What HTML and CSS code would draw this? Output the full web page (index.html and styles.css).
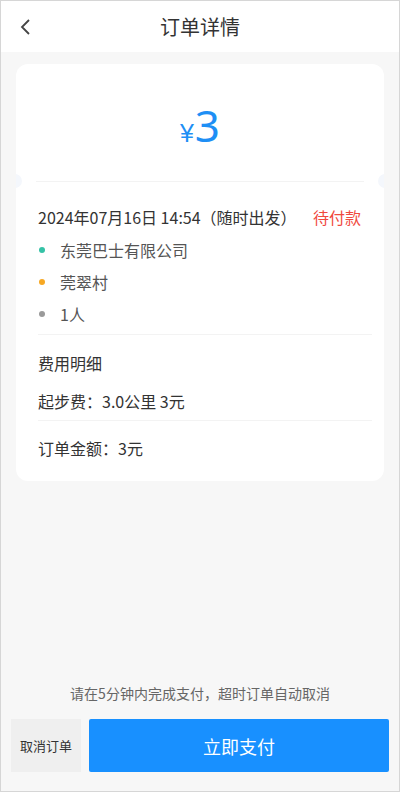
FILE: index.html
```html
<!DOCTYPE html>
<html>
<head>
    <meta charset="utf-8">
    <title>订单详情</title>
    <link rel="stylesheet" href="styles.css">
</head>
<body>
<div class="page">
    <div class="header">
        <span class="back">
            <svg width="12" height="18" viewBox="0 0 12 18"><path d="M10 2 L3 9 L10 16" fill="none" stroke="#444" stroke-width="1.8"/></svg>
        </span>
        <h1>订单详情</h1>
    </div>

    <div class="card">
        <div class="price">
            <span class="yen">¥</span><span class="amount">3</span>
        </div>
        <div class="cut">
            <span class="notch left"></span>
            <span class="line"></span>
            <span class="notch right"></span>
        </div>
        <div class="info">
            <div class="date-row">
                <span>2024年07月16日 14:54（随时出发）</span>
                <span class="status">待付款</span>
            </div>
            <ul class="items">
                <li class="item"><i class="dot green"></i>东莞巴士有限公司</li>
                <li class="item"><i class="dot orange"></i>莞翠村</li>
                <li class="item"><i class="dot gray"></i>1人</li>
            </ul>
        </div>
        <div class="fees">
            <div class="fees-title">费用明细</div>
            <div class="fee-row">起步费：3.0公里 3元</div>
        </div>
        <div class="total">订单金额：3元</div>
    </div>

    <div class="footer">
        <p class="hint">请在5分钟内完成支付，超时订单自动取消</p>
        <div class="actions">
            <button class="cancel-btn">取消订单</button>
            <button class="pay-btn">立即支付</button>
        </div>
    </div>
</div>
</body>
</html>
```

FILE: styles.css
```css
* {
    box-sizing: border-box;
}
body {
    margin: 0;
    font-family: "Noto Sans CJK SC", "Noto Sans", sans-serif;
    background: #fff;
}
.page {
    height: 792px;
    border: 1px solid #d6d6d6;
    background: #f7f7f7;
    display: flex;
    flex-direction: column;
}
.header {
    height: 51px;
    background: #fff;
    display: flex;
    align-items: center;
    justify-content: center;
    position: relative;
}
.header h1 {
    margin: 0;
    font-size: 20px;
    font-weight: normal;
    color: #333;
}
.back {
    position: absolute;
    left: 18px;
    top: 16px;
}
.card {
    margin: 12px 15px 0;
    background: #fff;
    border-radius: 12px;
    overflow: hidden;
}
.price {
    height: 116px;
    display: flex;
    align-items: baseline;
    justify-content: center;
    padding-top: 36px;
    color: #1e8ff5;
}
.yen {
    font-size: 25px;
    font-family: "Liberation Sans", sans-serif;
}
.amount {
    font-size: 44px;
    line-height: 50px;
    font-family: "Noto Sans", sans-serif;
    margin-left: 1px;
}
.cut {
    display: flex;
    align-items: center;
    height: 2px;
}
.notch {
    width: 14px;
    height: 14px;
    border-radius: 50%;
    background: #f4f7fc;
    flex: none;
}
.notch.left { margin-left: -8px; }
.notch.right { margin-right: -8px; }
.line {
    flex: 1;
    height: 1px;
    background: #f3f3f3;
    margin: 0 14px;
}
.info {
    margin: 0 12px 0 22px;
    padding: 24px 11px 4px 0;
    border-bottom: 1px solid #f3f3f3;
}
.date-row {
    display: flex;
    justify-content: space-between;
    font-size: 16px;
    color: #333;
    height: 22px;
    line-height: 22px;
}
.status {
    color: #f0493e;
}
.items {
    list-style: none;
    margin: 6px 0 0;
    padding: 0;
}
.item {
    font-size: 16px;
    color: #555;
    height: 32px;
    display: flex;
    align-items: center;
}
.dot {
    width: 6px;
    height: 6px;
    border-radius: 50%;
    margin: 0 15px 0 1px;
}
.dot.green { background: #35c2a6; }
.dot.orange { background: #f7a823; }
.dot.gray { background: #9a9a9a; }
.fees {
    margin: 0 12px 0 22px;
    padding: 16px 0 7px;
    font-size: 16px;
    color: #333;
    border-bottom: 1px solid #f3f3f3;
}
.fees-title {
    line-height: 24px;
}
.fee-row {
    margin-top: 14px;
    line-height: 24px;
}
.total {
    padding: 15px 22px 21px;
    font-size: 16px;
    color: #333;
    line-height: 24px;
}
.footer {
    margin-top: auto;
    padding: 0 10px 19px;
}
.hint {
    margin: 0 0 16px;
    text-align: center;
    font-size: 14px;
    color: #666;
}
.actions {
    display: flex;
    gap: 8px;
    height: 53px;
}
.cancel-btn {
    width: 70px;
    border: none;
    background: #efefef;
    font-family: inherit;
    font-size: 13px;
    color: #333;
    padding: 0;
}
.pay-btn {
    flex: 1;
    border: none;
    border-radius: 2px;
    background: #1890ff;
    color: #fff;
    font-family: inherit;
    font-size: 18px;
}
```
